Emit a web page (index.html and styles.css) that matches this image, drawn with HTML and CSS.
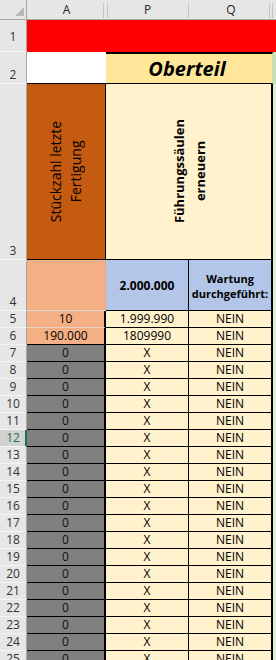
FILE: index.html
```html
<!DOCTYPE html>
<html lang="de">
<head>
<meta charset="utf-8">
<title>Oberteil</title>
<link rel="stylesheet" href="styles.css">
</head>
<body>
<div class="sheet">
  <div class="corner"><svg class="tri" width="9" height="9" viewBox="0 0 9 9"><polygon points="9,0 9,9 0,9" fill="#b8b8b8"/></svg></div>
  <div class="ch ch-a">A</div>
  <div class="ch ch-p">P</div>
  <div class="ch ch-q">Q</div>
  <div class="ch ch-r"></div>

  <div class="rh rh-mid">1</div>
  <div class="c red"></div>

  <div class="rh">2</div>
  <div class="c a2"></div>
  <div class="c title">Oberteil</div>
  <div class="c g2"></div>

  <div class="rh">3</div>
  <div class="c a3"><span class="vt">Stückzahl letzte<br>Fertigung</span></div>
  <div class="c pq3"><span class="vt vt-b">Führungssäulen<br>erneuern</span></div>
  <div class="c g"></div>

  <div class="rh">4</div>
  <div class="c a4"></div>
  <div class="c p4">2.000.000</div>
  <div class="c q4">Wartung<br>durchgeführt:</div>
  <div class="c g"></div>

  <div class="rh">5</div>
  <div class="c a a-soft">10</div><div class="c p">1.999.990</div><div class="c q">NEIN</div><div class="c g"></div>
  <div class="rh">6</div>
  <div class="c a a-soft2">190.000</div><div class="c p">1809990</div><div class="c q">NEIN</div><div class="c g"></div>
  <div class="rh">7</div>
  <div class="c a a-gray">0</div><div class="c p">X</div><div class="c q">NEIN</div><div class="c g"></div>
  <div class="rh">8</div>
  <div class="c a a-gray">0</div><div class="c p">X</div><div class="c q">NEIN</div><div class="c g"></div>
  <div class="rh">9</div>
  <div class="c a a-gray">0</div><div class="c p">X</div><div class="c q">NEIN</div><div class="c g"></div>
  <div class="rh">10</div>
  <div class="c a a-gray">0</div><div class="c p">X</div><div class="c q">NEIN</div><div class="c g"></div>
  <div class="rh">11</div>
  <div class="c a a-gray">0</div><div class="c p">X</div><div class="c q">NEIN</div><div class="c g"></div>
  <div class="rh rh-active">12</div>
  <div class="c a a-gray">0</div><div class="c p">X</div><div class="c q">NEIN</div><div class="c g"></div>
  <div class="rh">13</div>
  <div class="c a a-gray">0</div><div class="c p">X</div><div class="c q">NEIN</div><div class="c g"></div>
  <div class="rh">14</div>
  <div class="c a a-gray">0</div><div class="c p">X</div><div class="c q">NEIN</div><div class="c g"></div>
  <div class="rh">15</div>
  <div class="c a a-gray">0</div><div class="c p">X</div><div class="c q">NEIN</div><div class="c g"></div>
  <div class="rh">16</div>
  <div class="c a a-gray">0</div><div class="c p">X</div><div class="c q">NEIN</div><div class="c g"></div>
  <div class="rh">17</div>
  <div class="c a a-gray">0</div><div class="c p">X</div><div class="c q">NEIN</div><div class="c g"></div>
  <div class="rh">18</div>
  <div class="c a a-gray">0</div><div class="c p">X</div><div class="c q">NEIN</div><div class="c g"></div>
  <div class="rh">19</div>
  <div class="c a a-gray">0</div><div class="c p">X</div><div class="c q">NEIN</div><div class="c g"></div>
  <div class="rh">20</div>
  <div class="c a a-gray">0</div><div class="c p">X</div><div class="c q">NEIN</div><div class="c g"></div>
  <div class="rh">21</div>
  <div class="c a a-gray">0</div><div class="c p">X</div><div class="c q">NEIN</div><div class="c g"></div>
  <div class="rh">22</div>
  <div class="c a a-gray">0</div><div class="c p">X</div><div class="c q">NEIN</div><div class="c g"></div>
  <div class="rh">23</div>
  <div class="c a a-gray">0</div><div class="c p">X</div><div class="c q">NEIN</div><div class="c g"></div>
  <div class="rh">24</div>
  <div class="c a a-gray">0</div><div class="c p">X</div><div class="c q">NEIN</div><div class="c g"></div>
  <div class="rh">25</div>
  <div class="c a a-gray">0</div><div class="c p">X</div><div class="c q">NEIN</div><div class="c g"></div>
</div>
</body>
</html>
```
FILE: styles.css
```css
* { box-sizing: border-box; }
html, body {
  margin: 0;
  padding: 0;
  background: #ffffff;
  overflow: hidden;
}
body {
  width: 276px;
  height: 660px;
  font-family: "Open Sans", "DejaVu Sans", sans-serif;
  font-size: 12px;
  color: #000;
}
.sheet {
  display: grid;
  grid-template-columns: 27px 79px 83px 84px 3px;
  grid-template-rows: 20px 32px 32px 176px 51px;
  grid-auto-rows: 17px;
  height: 660px;
  overflow: hidden;
}

/* column headers */
.corner {
  background: #e6e6e6;
  border-right: 1px solid #a6a6a6;
  border-bottom: 1px solid #a6a6a6;
  position: relative;
}
.tri {
  position: absolute;
  left: 15px;
  top: 7px;
}
.ch {
  background: #e6e6e6;
  border-bottom: 1px solid #a6a6a6;
  color: #262626;
  font-size: 12px;
  line-height: 19px;
  text-align: center;
  position: relative;
}
.ch::before, .ch::after {
  content: "";
  position: absolute;
  top: 3px;
  bottom: 1px;
  width: 1px;
  background: #c4c4c4;
}
.ch::before { display: none; }
.ch-a::after { right: 2px; }
.ch-p::before { display: block; left: 1px; }
.ch-p::after { right: 0; }
.ch-q::after { right: 3px; }
.ch-q::before { display: block; right: 0; }
.ch-r::after { display: none; }

/* row headers */
.rh {
  background: #e6e6e6;
  border-right: 1px solid #a6a6a6;
  border-bottom: 1px solid #f4f4f4;
  color: #333;
  font-size: 12px;
  line-height: 14px;
  display: flex;
  align-items: flex-end;
  justify-content: center;
  padding-bottom: 1px;
}
.rh-mid { align-items: center; padding-top: 4px; }
.rh-active {
  background: #d2d2d2;
  color: #217346;
  border-right: 2px solid #217346;
  padding-left: 1px;
}

/* cells */
.c {
  display: flex;
  align-items: flex-end;
  justify-content: center;
  line-height: 16px;
  white-space: nowrap;
}
.red {
  grid-column: span 4;
  background: #ff0000;
}
.a2 {
  background: #ffffff;
  border-bottom: 1px solid #000;
}
.title {
  grid-column: span 2;
  background: #ffe699;
  border-top: 2px solid #000;
  border-bottom: 1px solid #000;
  border-right: 1px solid #d6d6c8;
  font-size: 20px;
  font-weight: bold;
  font-style: italic;
  line-height: 29px;
  align-items: center;
  padding-right: 4px;
}
.g2 {
  background: #c6e0b4;
}
.g {
  background: #e2efda;
}
.a3 {
  background: #c55a11;
  border-right: 1px solid #000;
  border-bottom: 1px solid #000;
  align-items: center;
}
.pq3 {
  grid-column: span 2;
  background: #fff2cc;
  border-right: 2px solid #000;
  border-bottom: 1px solid #000;
  align-items: center;
}
.vt {
  writing-mode: vertical-rl;
  transform: rotate(180deg);
  text-align: center;
  font-size: 14px;
  line-height: 20px;
  white-space: nowrap;
}
.vt-b {
  font-size: 13px;
  font-weight: bold;
  line-height: 21px;
  margin-left: 2px;
}
.a4 {
  background: #f4b084;
  border-right: 1px solid #e9a87e;
  border-bottom: 1px solid #dcdcdc;
}
.p4 {
  background: #b4c6e7;
  border-right: 1px solid #000;
  border-bottom: 1px solid #000;
  font-weight: bold;
  align-items: center;
  padding-top: 2px;
}
.q4 {
  background: #b4c6e7;
  border-right: 2px solid #000;
  border-bottom: 1px solid #000;
  font-weight: bold;
  font-size: 11px;
  line-height: 15px;
  text-align: center;
  align-items: center;
  padding-top: 1px;
}
.a {
  border-right: 2px solid #000;
  border-bottom: 1px solid #000;
}
.a-soft {
  background: #f4b084;
  border-bottom-color: #e6d2c4;
}
.a-soft2 { background: #f4b084; }
.a-gray {
  background: #808080;
  color: #111;
}
.p {
  background: #fff2cc;
  border-right: 1px solid #000;
  border-bottom: 1px solid #000;
}
.q {
  background: #fff2cc;
  border-right: 2px solid #000;
  border-bottom: 1px solid #000;
}
```
